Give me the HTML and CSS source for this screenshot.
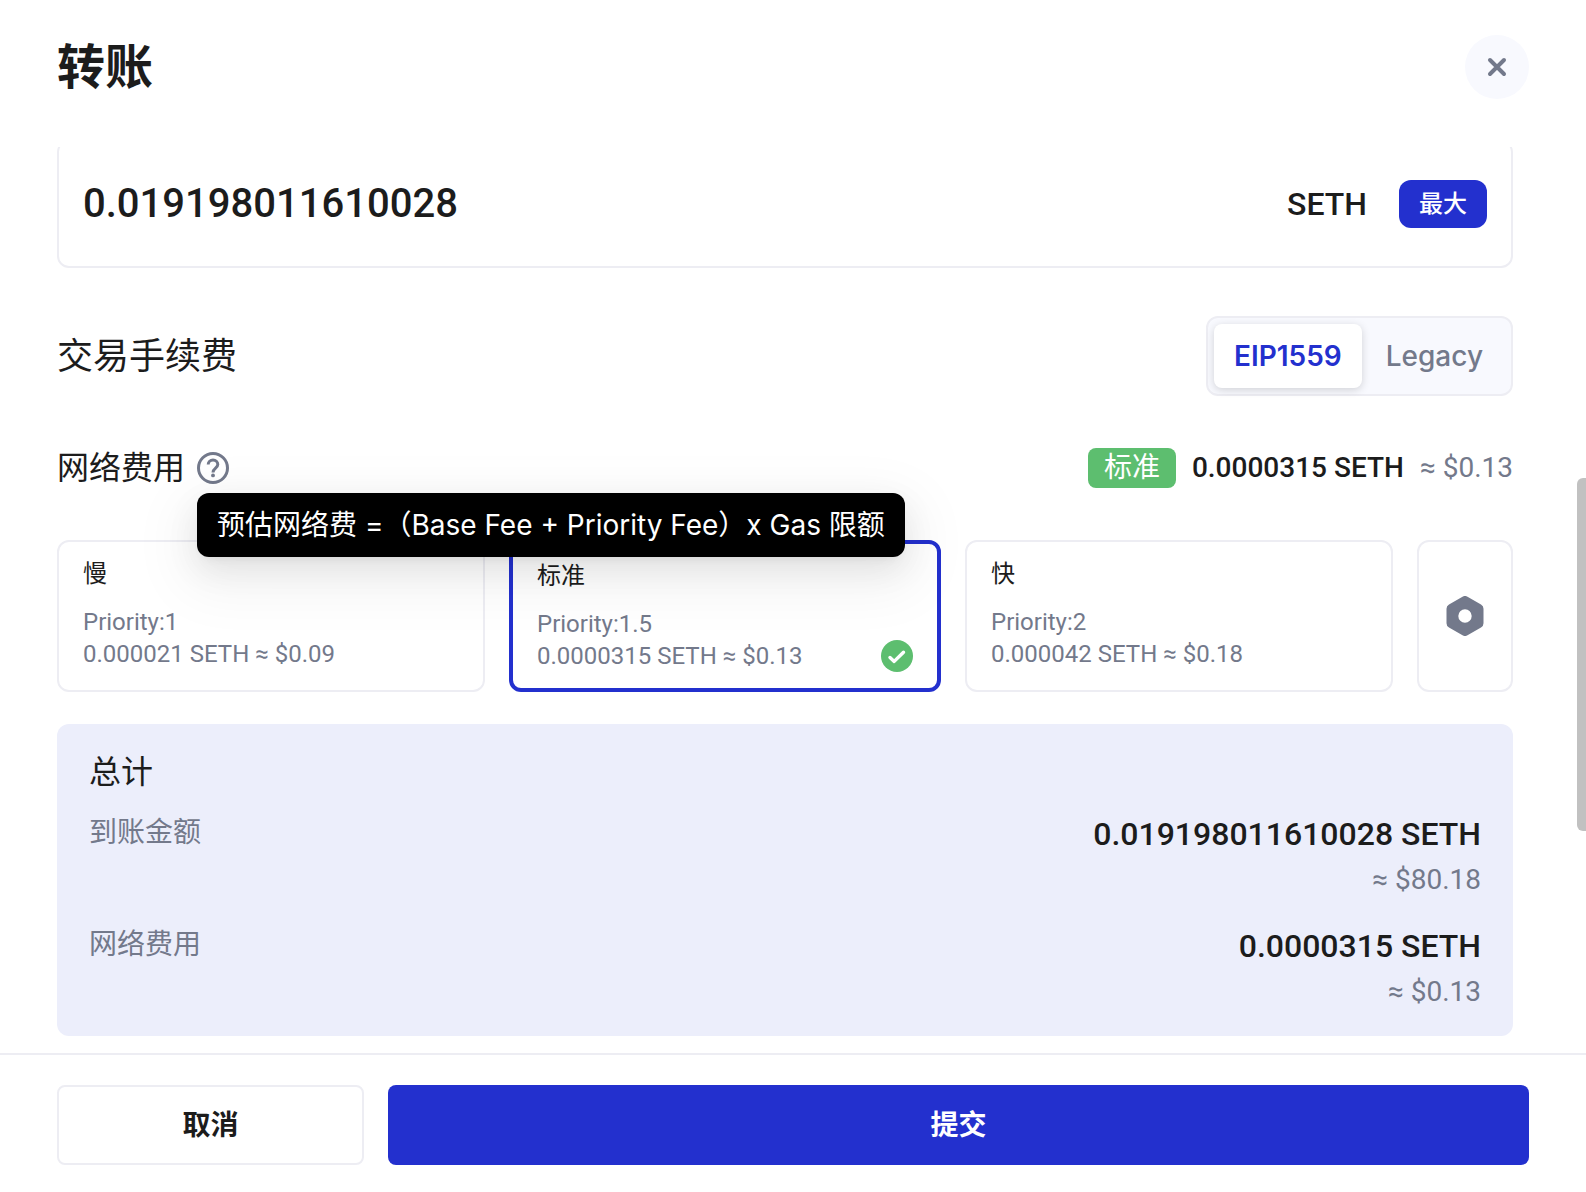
FILE: index.html
```html
<!DOCTYPE html>
<html lang="zh-CN">
<head>
<meta charset="utf-8">
<meta name="viewport" content="width=device-width, initial-scale=1">
<title>转账</title>
<link rel="stylesheet" href="styles.css">
</head>
<body>
<form class="dialog">
  <header class="dialog-header">
    <h1 class="dialog-title">转账</h1>
    <button class="close" type="button" aria-label="关闭">
      <svg width="20" height="20" viewBox="0 0 20 20" fill="none" stroke="currentColor" stroke-width="4" stroke-linecap="round"><path d="M3 3l14 14M17 3L3 17"/></svg>
    </button>
  </header>

  <main class="dialog-body">
    <div class="amount">
      <input class="amount-input" type="text" inputmode="decimal" aria-label="金额" value="0.019198011610028">
      <span class="amount-unit">SETH</span>
      <button class="max" type="button">最大</button>
    </div>

    <div class="fee-header">
      <h2 class="fee-title">交易手续费</h2>
      <div class="segments">
        <button class="segment segment-active" type="button" aria-pressed="true">EIP1559</button>
        <button class="segment" type="button" aria-pressed="false">Legacy</button>
      </div>
    </div>

    <div class="network">
      <span class="network-label">网络费用</span>
      <span class="help">
        <svg class="help-icon" width="32" height="32" viewBox="0 0 32 32" fill="none" stroke="currentColor" stroke-width="3"><circle cx="16" cy="16" r="14.5"/><path d="M11.2 12.6C11.2 9.9 13.3 8.100 16 8.100s4.800 1.800 4.800 4.400c0 3.500-4.800 3.700-4.800 7.900"/><circle cx="16" cy="23.400" r="1.900" fill="currentColor" stroke="none"/></svg>
        <span class="tooltip" role="tooltip">预估网络费 =（Base Fee + Priority Fee）x Gas 限额</span>
      </span>
      <span class="network-value">
        <span class="badge">标准</span>
        <span class="network-amount">0.0000315 SETH</span>
        <span class="network-fiat">≈ $0.13</span>
      </span>
    </div>

    <div class="speeds">
      <label class="speed">
        <input class="speed-radio" type="radio" name="speed" value="slow">
        <span class="speed-text">
          <span class="speed-name">慢</span>
          <span class="speed-line">Priority:1</span>
          <span class="speed-line">0.000021 SETH ≈ $0.09</span>
        </span>
      </label>
      <label class="speed speed-selected">
        <input class="speed-radio" type="radio" name="speed" value="standard" checked>
        <span class="speed-text">
          <span class="speed-name">标准</span>
          <span class="speed-line">Priority:1.5</span>
          <span class="speed-line">0.0000315 SETH ≈ $0.13</span>
        </span>
        <svg class="check" width="32" height="32" viewBox="0 0 32 32" fill="none"><circle cx="16" cy="16" r="16" fill="#5dbe6f"/><path d="M9 17.500l4.200 3.900L22.500 12.200" stroke="#fff" stroke-width="3.400" stroke-linecap="round" stroke-linejoin="round"/></svg>
      </label>
      <label class="speed">
        <input class="speed-radio" type="radio" name="speed" value="fast">
        <span class="speed-text">
          <span class="speed-name">快</span>
          <span class="speed-line">Priority:2</span>
          <span class="speed-line">0.000042 SETH ≈ $0.18</span>
        </span>
      </label>
      <button class="settings" type="button" aria-label="自定义">
        <svg width="40" height="40" viewBox="0 0 40 40"><path fill="currentColor" fill-rule="evenodd" d="M17.500.7a5 5 0 0 1 5 0l13.500 7.800a5 5 0 0 1 2.500 4.300v14.400a5 5 0 0 1-2.500 4.300l-13.500 7.800a5 5 0 0 1-5 0L4 31.500a5 5 0 0 1-2.500-4.300V12.800A5 5 0 0 1 4 8.500zM20 13.300a6.700 6.700 0 1 0 0 13.400a6.700 6.700 0 0 0 0-13.400z"/></svg>
      </button>
    </div>

    <section class="total">
      <h2 class="total-title">总计</h2>
      <dl class="total-list">
        <div class="total-row">
          <dt class="total-label">到账金额</dt>
          <dd class="total-value">
            <span class="total-amount">0.019198011610028 SETH</span>
            <span class="total-fiat">≈ $80.18</span>
          </dd>
        </div>
        <div class="total-row">
          <dt class="total-label">网络费用</dt>
          <dd class="total-value">
            <span class="total-amount">0.0000315 SETH</span>
            <span class="total-fiat">≈ $0.13</span>
          </dd>
        </div>
      </dl>
    </section>
  </main>
  <div class="scroll-thumb"></div>

  <footer class="dialog-footer">
    <button class="button button-cancel" type="button">取消</button>
    <button class="button button-submit" type="submit">提交</button>
  </footer>
</form>
</body>
</html>
```
FILE: styles.css
```css
:root {
  --ink: #1c1c1c;
  --muted: #73798b;
  --line: #ededf3;
  --primary: #2330ce;
  --green: #5dbe6f;
  --soft: #f8f9fe;
  --text: Inter, "Noto Sans CJK SC", sans-serif;
  --number: Roboto, "Noto Sans CJK SC", sans-serif;
}

* {
  box-sizing: border-box;
}

body {
  margin: 0;
  color: var(--ink);
  background: #fff;
  font-family: var(--text);
}

h1,
h2,
dl,
dd {
  margin: 0;
}

button,
input {
  font: inherit;
  color: inherit;
}

button {
  padding: 0;
  border: 0;
  cursor: pointer;
}

svg {
  display: block;
}

.dialog {
  position: relative;
  display: flex;
  flex-direction: column;
  height: 100vh;
}

.dialog-header {
  display: flex;
  justify-content: space-between;
  align-items: center;
  padding: 35px 57px 48px;
}

.dialog-title {
  font: 700 48px/64px var(--text);
}

.close {
  display: grid;
  place-items: center;
  width: 64px;
  height: 64px;
  border-radius: 50%;
  color: var(--muted);
  background: var(--soft);
}

.dialog-body {
  flex: 1;
  min-height: 0;
  overflow: hidden;
  padding: 0 73px 0 57px;
}

/* The body is scrolled a little past the top edge of the amount box. */
.amount {
  display: flex;
  align-items: center;
  gap: 32px;
  height: 128px;
  margin-top: -7px;
  padding: 0 24px;
  border: 2px solid var(--line);
  border-radius: 12px;
}

.amount-input {
  flex: 1;
  min-width: 0;
  padding: 0;
  border: 0;
  outline: 0;
  background: none;
  font: 500 40px/56px var(--number);
}

.amount-unit {
  font: 500 32px/48px var(--number);
}

.max {
  width: 88px;
  height: 48px;
  border-radius: 12px;
  color: #fff;
  background: var(--primary);
  font: 500 24px/48px var(--text);
}

.fee-header {
  display: flex;
  justify-content: space-between;
  align-items: center;
  margin-top: 48px;
}

.fee-title {
  font: 400 36px/48px var(--text);
}

.segments {
  display: flex;
  gap: 4px;
  padding: 6px 8px 6px 6px;
  border: 2px solid var(--line);
  border-radius: 12px;
  background: var(--soft);
}

.segment {
  height: 64px;
  padding: 0 20px;
  border-radius: 8px;
  color: var(--muted);
  background: none;
  font-size: 28px;
  font-weight: 500;
}

.segment-active {
  color: var(--primary);
  background: #fff;
  font-weight: 600;
  box-shadow: 0 2px 8px rgba(0, 0, 0, 0.16);
}

.network {
  display: flex;
  align-items: center;
  gap: 12px;
  height: 40px;
  margin-top: 52px;
}

.network-label {
  font: 400 32px/40px var(--text);
}

.help {
  position: relative;
  color: var(--muted);
}

.tooltip {
  position: absolute;
  z-index: 1;
  top: 41px;
  left: 0;
  padding: 0 20px;
  border-radius: 12px;
  color: #fff;
  background: #000;
  font-size: 28px;
  line-height: 64px;
  white-space: nowrap;
  box-shadow: 0 12px 32px rgba(0, 0, 0, 0.08), 0 6px 12px -8px rgba(0, 0, 0, 0.12), 0 18px 56px 16px rgba(0, 0, 0, 0.05);
}

.network-value {
  display: flex;
  align-items: center;
  gap: 16px;
  margin-left: auto;
  font: 400 28px/40px var(--number);
}

.badge {
  padding: 0 16px;
  border-radius: 8px;
  color: #fff;
  background: var(--green);
}

.network-amount {
  font-weight: 500;
}

.network-fiat {
  color: var(--muted);
}

.speeds {
  display: flex;
  gap: 24px;
  margin-top: 52px;
}

.speed {
  display: flex;
  flex: 1 1 0;
  justify-content: space-between;
  align-items: flex-end;
  min-height: 152px;
  padding: 16px 24px;
  border: 2px solid var(--line);
  border-radius: 12px;
  cursor: pointer;
}

.speed-selected {
  border: 4px solid var(--primary);
}

.speed-radio {
  position: absolute;
  width: 1px;
  height: 1px;
  margin: 0;
  opacity: 0;
}

.speed-text {
  display: flex;
  flex-direction: column;
  align-self: flex-start;
  font: 400 24px/32px var(--number);
}

.speed-name {
  margin-bottom: 16px;
  font-family: var(--text);
}

.speed-line {
  color: var(--muted);
}

.settings {
  display: grid;
  place-items: center;
  width: 96px;
  border: 2px solid var(--line);
  border-radius: 12px;
  color: var(--muted);
  background: none;
}

.total {
  margin-top: 32px;
  padding: 24px 32px;
  border-radius: 12px;
  background: #eceefb;
}

.total-title {
  font: 400 32px/48px var(--text);
}

.total-list {
  display: flex;
  flex-direction: column;
  gap: 20px;
  margin-top: 12px;
}

.total-row {
  display: flex;
  justify-content: space-between;
}

.total-label {
  color: var(--muted);
  font: 400 28px/48px var(--text);
}

.total-value {
  display: flex;
  flex-direction: column;
  align-items: flex-end;
  font-family: var(--number);
}

.total-amount {
  font-size: 32px;
  font-weight: 500;
  line-height: 52px;
}

.total-fiat {
  color: var(--muted);
  font-size: 28px;
  line-height: 40px;
}

.scroll-thumb {
  position: absolute;
  top: 478px;
  right: 0;
  width: 9px;
  height: 353px;
  border-radius: 6px 0 0 6px;
  background: #c1c1c1;
}

.dialog-footer {
  display: flex;
  gap: 24px;
  padding: 30px 57px 27px;
  border-top: 2px solid var(--line);
}

.button {
  height: 80px;
  border-radius: 8px;
  font: 700 28px/40px var(--text);
}

.button-cancel {
  width: 307px;
  border: 2px solid var(--line);
  background: #fff;
}

.button-submit {
  flex: 1;
  color: #fff;
  background: var(--primary);
}
```
